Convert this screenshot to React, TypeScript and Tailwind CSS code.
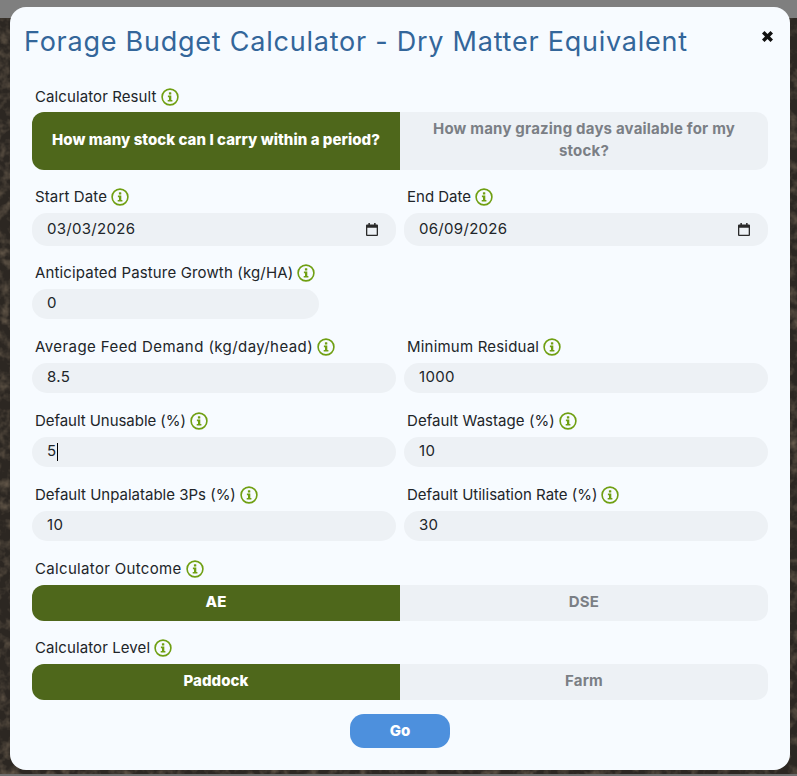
import React from "react";

const font = { fontFamily: '"Inter", "Liberation Sans", sans-serif' };

function Info() {
  return (
    <svg width="18" height="18" viewBox="0 0 18 18" className="shrink-0">
      <circle cx="9" cy="9" r="7.9" fill="none" stroke="#6f9f12" strokeWidth="1.6" />
      <rect x="7.9" y="4.2" width="2.4" height="2.3" rx="0.5" fill="#6f9f12" />
      <path d="M6.9 7.6h3.4v4.3h1.1v1.6H6.7v-1.6h1.3V9.2H6.9z" fill="#6f9f12" />
    </svg>
  );
}

function Label({ children, className = "", t = "" }: { children: React.ReactNode; className?: string; t?: string }) {
  return (
    <div className={`flex h-[18px] items-center gap-[4px] pl-[3px] text-[15px] leading-[18px] text-[#212529] ${className}`}>
      <span className={t}>{children}</span>
      <Info />
    </div>
  );
}

function Field({ label, value, caret, date, t }: { label: string; value: string; caret?: boolean; date?: boolean; t?: string }) {
  return (
    <div className="flex flex-col gap-[7px]">
      <Label t={t}>{label}</Label>
      <div className={`flex items-center justify-between rounded-[15px] bg-[#edf1f5] pl-[15px] pr-[18px] text-[15px] tracking-[0.3px] text-[#212529] ${date ? "h-[33px]" : "h-[30px]"}`}>
        <span className={`flex items-center ${date ? "mt-[-1px]" : "mt-[-1px]"}`}>
          {value}
          {caret && <span className="ml-px inline-block h-[18px] w-px bg-black" />}
        </span>
        {date && (
          <svg width="12" height="13" viewBox="0 0 12 13" className="mt-[-1px]">
            <path d="M1 1.5h10a1 1 0 0 1 1 1v9.5a1 1 0 0 1-1 1H1a1 1 0 0 1-1-1V2.500a1 1 0 0 1 1-1z M1.300 4.800v6.900h9.400V4.800z" fill="#2a2a2a" fillRule="evenodd" />
            <rect x="2.400" y="0" width="1.500" height="2" fill="#2a2a2a" />
            <rect x="8.100" y="0" width="1.500" height="2" fill="#2a2a2a" />
          </svg>
        )}
      </div>
    </div>
  );
}

function Toggle({ left, right, tall }: { left: string; right: string; tall?: boolean }) {
  return (
    <div className={`grid grid-cols-2 text-center text-[15px] leading-[22px] ${tall ? "h-[58px]" : "h-[36px]"}`}>
      <div className="flex items-center justify-center rounded-l-[12px] bg-[#4e671b] pb-[2px] font-extrabold tracking-[0.05px] text-white">{left}</div>
      <div className="flex items-center justify-center rounded-r-[12px] bg-[#edf1f5] px-[32px] pb-[2px] font-bold tracking-[0.2px] text-[#7b7f85]">{right}</div>
    </div>
  );
}

export default function App() {
  return (
    <div style={font} className="relative h-[776px] w-[797px] overflow-hidden bg-[#2f2a25]">
      <svg className="absolute inset-0" width="797" height="776">
        <filter id="ground" colorInterpolationFilters="sRGB">
          <feTurbulence type="fractalNoise" baseFrequency="0.1" numOctaves="3" seed="4" />
          <feColorMatrix values="0 0 0 0 0.42  0 0 0 0 0.37  0 0 0 0 0.31  0 0 0 1.8 -0.75" />
        </filter>
        <rect width="797" height="776" fill="#2c2722" />
        <rect width="797" height="776" filter="url(#ground)" />
      </svg>
      <div className="absolute left-0 right-0 top-0 h-[18px] bg-[#7f7f7f]" />
      <div className="absolute bottom-0 left-0 right-0 h-[2px] bg-[#6f6f6f]" />
      <div className="absolute left-[10px] top-[7px] h-[763px] w-[780px] rounded-[16px] bg-[#f7fbff] pl-[22px] pr-[22px]">
        <div className="flex h-[66px] items-start justify-between pr-[1px]">
          <h1 className="ml-[-8px] mt-[15px] text-[27px] font-normal leading-[40px] tracking-[0.76px] text-[#33669a]">
            Forage Budget Calculator - Dry Matter Equivalent
          </h1>
          <svg width="13" height="13" viewBox="0 0 13 13" className="mr-[-7px] mt-[23px]">
            <path d="M1 3.500 3.500 1 6.500 4l3-3L12 3.500l-3 3 3 3L9.500 12l-3-3-3 3L1 9.500l3-3z" fill="#111" />
          </svg>
        </div>
        <div className="flex flex-col">
          <Label className="mb-[6px] mt-[15px]" t="tracking-[0.1px]">Calculator Result</Label>
          <Toggle tall left="How many stock can I carry within a period?" right="How many grazing days available for my stock?" />
          <div className="mt-[18px] grid grid-cols-2 gap-x-[8px]">
            <Field date label="Start Date" value="03/03/2026" t="tracking-[0.13px]" />
            <Field date label="End Date" value="06/09/2026" />
          </div>
          <div className="mt-[18px] w-[287px]">
            <Field label="Anticipated Pasture Growth (kg/HA)" value="0" t="tracking-[0.15px]" />
          </div>
          <div className="mt-[19px] grid grid-cols-2 gap-x-[8px] gap-y-[19px]">
            <Field label="Average Feed Demand (kg/day/head)" value="8.5" t="tracking-[0.42px]" />
            <Field label="Minimum Residual" value="1000" t="tracking-[0.2px]" />
            <Field caret label="Default Unusable (%)" value="5" t="tracking-[-0.05px]" />
            <Field label="Default Wastage (%)" value="10" t="tracking-[0.05px]" />
            <Field label="Default Unpalatable 3Ps (%)" value="10" />
            <Field label="Default Utilisation Rate (%)" value="30" />
          </div>
          <Label className="mb-[7px] mt-[19px]" t="tracking-[0.33px]">Calculator Outcome</Label>
          <Toggle left="AE" right="DSE" />
          <Label className="mb-[7px] mt-[18px]" t="tracking-[0.1px]">Calculator Level</Label>
          <Toggle left="Paddock" right="Farm" />
          <button className="mx-auto mt-[14px] h-[34px] w-[100px] rounded-[14px] bg-[#4d90dd] text-[15px] font-extrabold text-white">Go</button>
        </div>
      </div>
    </div>
  );
}
